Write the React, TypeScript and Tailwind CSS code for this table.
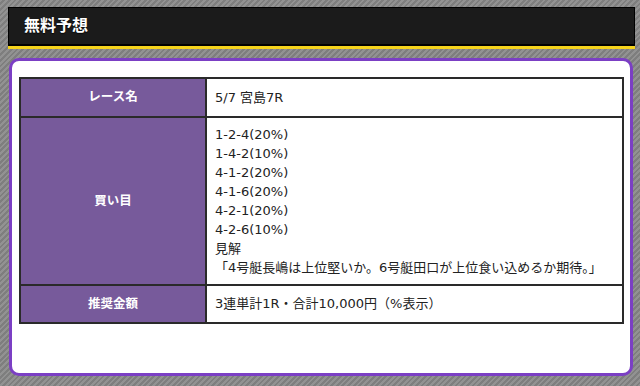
const picks = [
  '1-2-4(20%)',
  '1-4-2(10%)',
  '4-1-2(20%)',
  '4-1-6(20%)',
  '4-2-1(20%)',
  '4-2-6(10%)',
]

function HeadCell({ children }: { children: React.ReactNode }) {
  return (
    <th className="w-[186px] border-2 border-[#2a2a2a] bg-[#775a9b] text-center align-middle text-[12.5px] font-bold text-white">
      {children}
    </th>
  )
}

export default function App() {
  return (
    <div
      className="h-[386px] w-[640px] overflow-hidden bg-[repeating-linear-gradient(135deg,#929292_0px,#929292_2px,#7e7e7e_2px,#7e7e7e_4px)] pt-[7px]"
      style={{ fontFamily: '"DejaVu Sans", "Noto Sans CJK JP", sans-serif' }}
    >
      {/* Title bar */}
      <div className="ml-[8px] w-[627px]">
        <div className="flex h-[38px] items-center border border-black bg-[#1b1b1b] px-[15px]">
          <h2 className="text-[16px] font-bold text-white [text-shadow:0_1px_1px_rgba(0,0,0,0.8)]">無料予想</h2>
        </div>
        <div className="h-[4px] border-t border-black bg-[#f5d31c]" />
      </div>

      {/* Card */}
      <div className="ml-[9px] mt-[9px] h-[318px] w-[624px] rounded-[10px] border-[3px] border-[#7b3fc4] bg-white px-[7px] pt-[16px]">
        <table className="w-[605px] border-collapse text-[13px] text-[#222]">
          <tbody>
            <tr className="h-[39px]">
              <HeadCell>レース名</HeadCell>
              <td className="border-2 border-[#2a2a2a] px-[8px] align-middle">5/7 宮島7R</td>
            </tr>
            <tr>
              <HeadCell>買い目</HeadCell>
              <td className="border-2 border-[#2a2a2a] px-[8px] py-[7px] align-middle leading-[19px]">
                {picks.map((p) => (
                  <div key={p}>{p}</div>
                ))}
                <div>見解</div>
                <div>「4号艇長嶋は上位堅いか。6号艇田口が上位食い込めるか期待。」</div>
              </td>
            </tr>
            <tr className="h-[38px]">
              <HeadCell>推奨金額</HeadCell>
              <td className="border-2 border-[#2a2a2a] px-[8px] align-middle">3連単計1R・合計10,000円（%表示）</td>
            </tr>
          </tbody>
        </table>
      </div>
    </div>
  )
}
